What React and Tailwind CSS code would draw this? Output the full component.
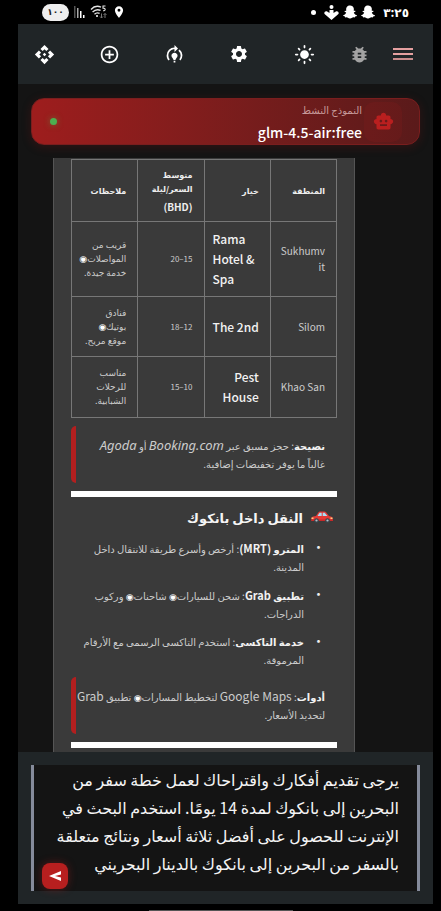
import React from "react";
import {
  MdApi,
  MdAddCircleOutline,
  MdModelTraining,
  MdSettings,
  MdLightMode,
  MdBugReport,
  MdSmartToy,
  MdLocationOn,
} from "react-icons/md";
import { FaSnapchatGhost } from "react-icons/fa";

const tools = [
  { label: "API", Icon: MdApi, size: 21 },
  { label: "إضافة", Icon: MdAddCircleOutline, size: 21 },
  { label: "تدريب النموذج", Icon: MdModelTraining, size: 21 },
  { label: "الإعدادات", Icon: MdSettings, size: 20 },
  { label: "السمة", Icon: MdLightMode, size: 21 },
];

const rows = [
  { area: ["Sukhumv", "it"], hotel: ["Rama", "Hotel &", "Spa"], ltr: true, price: "20–15", notes: ["قريب من", "المواصلات◉", "خدمة جيدة."], h: "h-[75px]" },
  { area: ["Silom"], hotel: ["The 2nd"], price: "18–12", notes: ["فنادق", "بوتيك◉", "موقع مريح."], h: "h-[60px]" },
  { area: ["Khao San"], hotel: ["Pest", "House"], price: "15–10", notes: ["مناسب", "للرحلات", "الشبابية."], h: "h-[61px]" },
];

const prompt = [
  "يرجى تقديم أفكارك واقتراحاك لعمل خطة سفر من",
  "البحرين إلى بانكوك لمدة 14 يومًا. استخدم البحث في",
  "الإنترنت للحصول على أفضل ثلاثة أسعار ونتائج متعلقة",
  "بالسفر من البحرين إلى بانكوك بالدينار البحريني",
].join("\n");

// Sets the round separator smaller and brighter than the words beside it.
function Marked({ text }) {
  return text.split("◉").map((part, i) => (
    <React.Fragment key={i}>
      {i > 0 && <span className="font-['DejaVu_Sans',sans-serif] text-[9px] leading-none text-white">◉</span>}
      {part}
    </React.Fragment>
  ));
}

function Lines({ items }) {
  return items.map((t) => (
    <span key={t} className="block whitespace-nowrap"><Marked text={t} /></span>
  ));
}

function StatusBar() {
  return (
    <div dir="ltr" className="flex h-6 shrink-0 items-center justify-between pl-[42px] pr-8 text-white">
      <div className="flex items-center gap-[5px]">
        <span className="flex h-[17px] w-[27px] items-center justify-center rounded-full bg-[#eeeeee] text-[9px] font-bold text-[#222]">١٠٠</span>
        <svg width="11" height="12" viewBox="0 0 11 12" aria-hidden="true">
          <rect x="0" y="0" width="1.5" height="12" fill="#555" />
          <rect x="3" y="2" width="1.5" height="10" fill="#aaa" />
          <rect x="6" y="5" width="1.5" height="7" fill="#fff" />
          <rect x="9" y="9" width="1.5" height="3" fill="#fff" />
        </svg>
        <svg width="17" height="14" viewBox="0 0 17 14" fill="none" stroke="#e5e5e5" strokeWidth="1.4" aria-hidden="true">
          <path d="M1 4.5C4 1.2 8 .8 11 2.2M2.6 7C5 4.6 8 4.2 10.6 5.4M4.5 9.2C6 7.8 8 7.6 9.6 8.4" />
          <circle cx="7" cy="11" r="1" fill="#fff" stroke="none" />
          <path d="M15.5 1H13v2.2c2.6-.4 3.2 2.6 0 2.6" strokeWidth="1.1" />
          <path d="M11.5 8.500v4.500m-1.500-1.500 1.500 1.500 1.500-1.500M15 13V8.500m-1.500 1.500L15 8.500 16.500 10" stroke="#777" strokeWidth="1" />
        </svg>
        <MdLocationOn size={14} />
      </div>
      <div className="flex items-center gap-1">
        <span className="mr-1 size-[5px] rounded-full bg-white" />
        <svg width="15" height="15" viewBox="0 0 15 15" fill="#fff" aria-hidden="true">
          <circle cx="7.500" cy="2" r="2" />
          <path d="M7.500 15 .6 9C-.4 7.500 1.200 5.400 3.200 6.400L5.500 8V5h4v3l2.300-1.600c2-1 3.600 1.100 2.600 2.600z" />
        </svg>
        <FaSnapchatGhost size={14} />
        <FaSnapchatGhost size={14} />
        <span className="ml-1 text-[12px] leading-4 font-bold">٣:٢٥</span>
      </div>
    </div>
  );
}

function Toolbar() {
  return (
    <header dir="ltr" className="flex h-[60px] shrink-0 items-center justify-between bg-[#202527] pl-[6px] pr-[10px] text-white">
      <div className="flex gap-[25px]">
        {tools.map(({ label, Icon, size }) => (
          <button key={label} type="button" aria-label={label} className="flex size-10 items-center justify-center">
            <Icon size={size} />
          </button>
        ))}
      </div>
      <div className="flex gap-1">
        <button type="button" aria-label="تصحيح الأخطاء" className="flex size-10 items-center justify-center text-[#a3a3a3]">
          <MdBugReport size={21} />
        </button>
        <button type="button" aria-label="القائمة" className="flex size-10 flex-col items-center justify-center gap-[3px]">
          <span className="h-[2px] w-5 bg-[#e5a0a0]" />
          <span className="h-[2px] w-5 bg-[#e5a0a0]" />
          <span className="h-[2px] w-5 bg-[#c98c8c]" />
        </button>
      </div>
    </header>
  );
}

function ModelCard() {
  return (
    <section className="mx-[13px] mt-[14px] flex h-[47px] shrink-0 items-center rounded-[13px] border border-[#7a1e1e] bg-linear-to-r from-[#9e1d1d] to-[#5a1a1a] pr-[17px] shadow-[0_2px_10px_rgba(120,20,20,0.3)]">
      <span className="flex h-10 w-[38px] items-center justify-center rounded-[10px] bg-[#b71c1c]/10 text-[#b91f1f]">
        <MdSmartToy size={21} />
      </span>
      <div className="ms-[2px] flex-1">
        <p className="text-[10px] leading-5 text-[#c79a9a]">النموذج النشط</p>
        <p dir="ltr" className="text-right text-[14px] leading-6 font-medium text-white">glm-4.5-air:free</p>
      </div>
      <span className="ml-[18px] size-[7px] rounded-full bg-[#4caf50] shadow-[0_0_6px_#4caf5080]" />
    </section>
  );
}

function Quote({ children }) {
  return (
    <blockquote className="rounded-l-[5px] border-l-[5px] border-[#b21f1f] py-[10px] pr-3">{children}</blockquote>
  );
}

function Car() {
  return (
    <svg width="22" height="14" viewBox="0 0 22 14" aria-hidden="true">
      <path d="M5 5 7.500 1.200Q8 .5 9 .5h4.500q1 0 1.600.7L18 5l2.500.8q1.200.5 1.200 2V10H.5V7.500q0-1.500 1.500-1.900z" fill="#e53935" />
      <path d="M6.500 5 8.500 1.800h2.200V5zM11.700 1.800h2L16.400 5h-4.700z" fill="#a9dcf2" />
      <path d="M.5 8.500h21.200V10H.5z" fill="#c62828" />
      <path d="M.5 6.500h2v1.500h-2zM19.500 6.500h2v1.500h-2z" fill="#ffcc80" />
      <circle cx="5.500" cy="9.500" r="2.300" fill="#37474f" />
      <circle cx="16.500" cy="9.500" r="2.300" fill="#37474f" />
      <circle cx="5.500" cy="9.500" r="1.100" fill="#b0bec5" />
      <circle cx="16.500" cy="9.500" r="1.100" fill="#b0bec5" />
    </svg>
  );
}

const cell = "border border-[#777] py-0 pr-[11px] pl-1 text-right align-middle";

function HotelTable() {
  return (
    <table className="w-full table-fixed border-collapse">
      <thead>
        <tr className="h-[62px] text-[8px] leading-[14px] font-bold text-[#eee]">
          <th className={cell}>المنطقة</th>
          <th className={cell}>خيار</th>
          <th className={cell}>
            <Lines items={["متوسط", "السعر/ليلة"]} />
            <span className="mt-1 block text-[10px]">(BHD)</span>
          </th>
          <th className={cell}>ملاحظات</th>
        </tr>
      </thead>
      <tbody>
        {rows.map((r) => (
          <tr key={r.price} className={r.h}>
            <td className={cell + " text-[10px] leading-4 text-[#ccc]"}><Lines items={r.area} /></td>
            <td className={cell + " text-[12px] leading-5 font-medium text-[#f2f2f2]"}>
              <div dir="ltr" className={r.ltr ? "ml-1 text-left" : ""}><Lines items={r.hotel} /></div>
            </td>
            <td className={cell + " text-[8px] leading-4 text-[#ccc]"}><span dir="ltr">{r.price}</span></td>
            <td className={cell + " text-[9px] leading-[14px] text-[#ccc]"}><Lines items={r.notes} /></td>
          </tr>
        ))}
      </tbody>
    </table>
  );
}

function Item({ title, latin, first, second }) {
  return (
    <li className="flex">
      <span className="w-[21px] shrink-0 text-[13px] leading-4 text-[#eee]">•</span>
      <div>
        <span className="block whitespace-nowrap">
          <strong className="font-bold text-[#f2f2f2]">
            {title}
            {latin && <span className="text-[11px]"> {latin}</span>}
          </strong>
          : <Marked text={first} />
        </span>
        <span className="block whitespace-nowrap">{second}</span>
      </div>
    </li>
  );
}

export default function App() {
  return (
    <div
      dir="rtl"
      className="flex h-screen flex-col overflow-hidden bg-black font-['Noto_Sans_CJK_SC','DejaVu_Sans',sans-serif]"
    >
      <StatusBar />
      <div className="mr-2 ml-[18px] flex min-h-0 flex-1 flex-col bg-[#141414]">
        <Toolbar />
        <ModelCard />
        <main className="mt-[13px] min-h-0 flex-1 overflow-hidden pr-[78px] pl-[35px]">
          <article className="border-x border-[#555] bg-[#3a3a3a] px-[17px] pt-px pb-10 text-[10px] leading-[18px] text-[#ccc]">
            <HotelTable />
            <div className="mt-2">
              <Quote>
                <span className="block whitespace-nowrap"><strong className="text-[#f2f2f2]">نصيحة</strong>: حجز مسبق عبر <em className="font-['Noto_Sans'] text-[13px]">Booking.com</em> أو <em className="font-['Noto_Sans'] text-[13px]">Agoda</em></span>
                <span className="block whitespace-nowrap">غالباً ما يوفر تخفيضات إضافية.</span>
              </Quote>
            </div>
            <hr className="mt-2 h-[6px] border-0 bg-white" />
            <h2 className="flex h-[42px] items-center gap-2 pr-1 text-[13px] font-bold text-[#f5f5f5]">
              <Car />
              النقل داخل بانكوك
            </h2>
            <ul className="flex flex-col gap-[10px] pr-3">
              <Item title="المترو" latin="(MRT)" first="أرخص وأسرع طريقة للانتقال داخل" second="المدينة." />
              <Item title="تطبيق" latin="Grab" first="شحن للسيارات◉ شاحنات◉ وركوب" second="الدراجات." />
              <Item title="خدمة التاكسى" first="استخدم التاكسى الرسمى مع الأرقام" second="المرموقة." />
            </ul>
            <div className="mt-2">
              <Quote>
                <span className="block whitespace-nowrap"><strong className="text-[#f2f2f2]">أدوات</strong>: <span className="text-[12px]">Google Maps</span> <Marked text="لتخطيط المسارات◉ تطبيق" /> <span className="text-[12px]">Grab</span></span>
                <span className="block whitespace-nowrap">لتحديد الأسعار.</span>
              </Quote>
            </div>
            <hr className="mt-2 h-[6px] border-0 bg-white" />
          </article>
        </main>
        <footer className="shrink-0 bg-[#202527] p-[13px]">
          <form className="relative" onSubmit={(e) => e.preventDefault()}>
            <textarea
              aria-label="الرسالة"
              defaultValue={prompt}
              rows={4}
              className="block h-[126px] w-full resize-none overflow-hidden border-x-[3px] border-[#858b9b] bg-[#141414] pr-[18px] pl-2 text-[16px] leading-7 whitespace-pre text-[#f5f5f5] outline-none"
            />
            <button type="submit" aria-label="إرسال" className="absolute bottom-[2px] left-[11px] flex size-[26px] items-center justify-center rounded-[8px] bg-[#b71f1f] text-white shadow-[0_0_8px_rgba(183,31,31,0.4)]">
              <svg width="12" height="10" viewBox="0 0 12 10" fill="currentColor" aria-hidden="true">
                <path d="M0 5 12 0v3.600L6 5l6 1.400V10z" />
              </svg>
            </button>
          </form>
        </footer>
      </div>
      <div className="flex h-[7px] shrink-0 items-end justify-center">
        <span className="h-px w-36 bg-[#555]" />
      </div>
    </div>
  );
}
